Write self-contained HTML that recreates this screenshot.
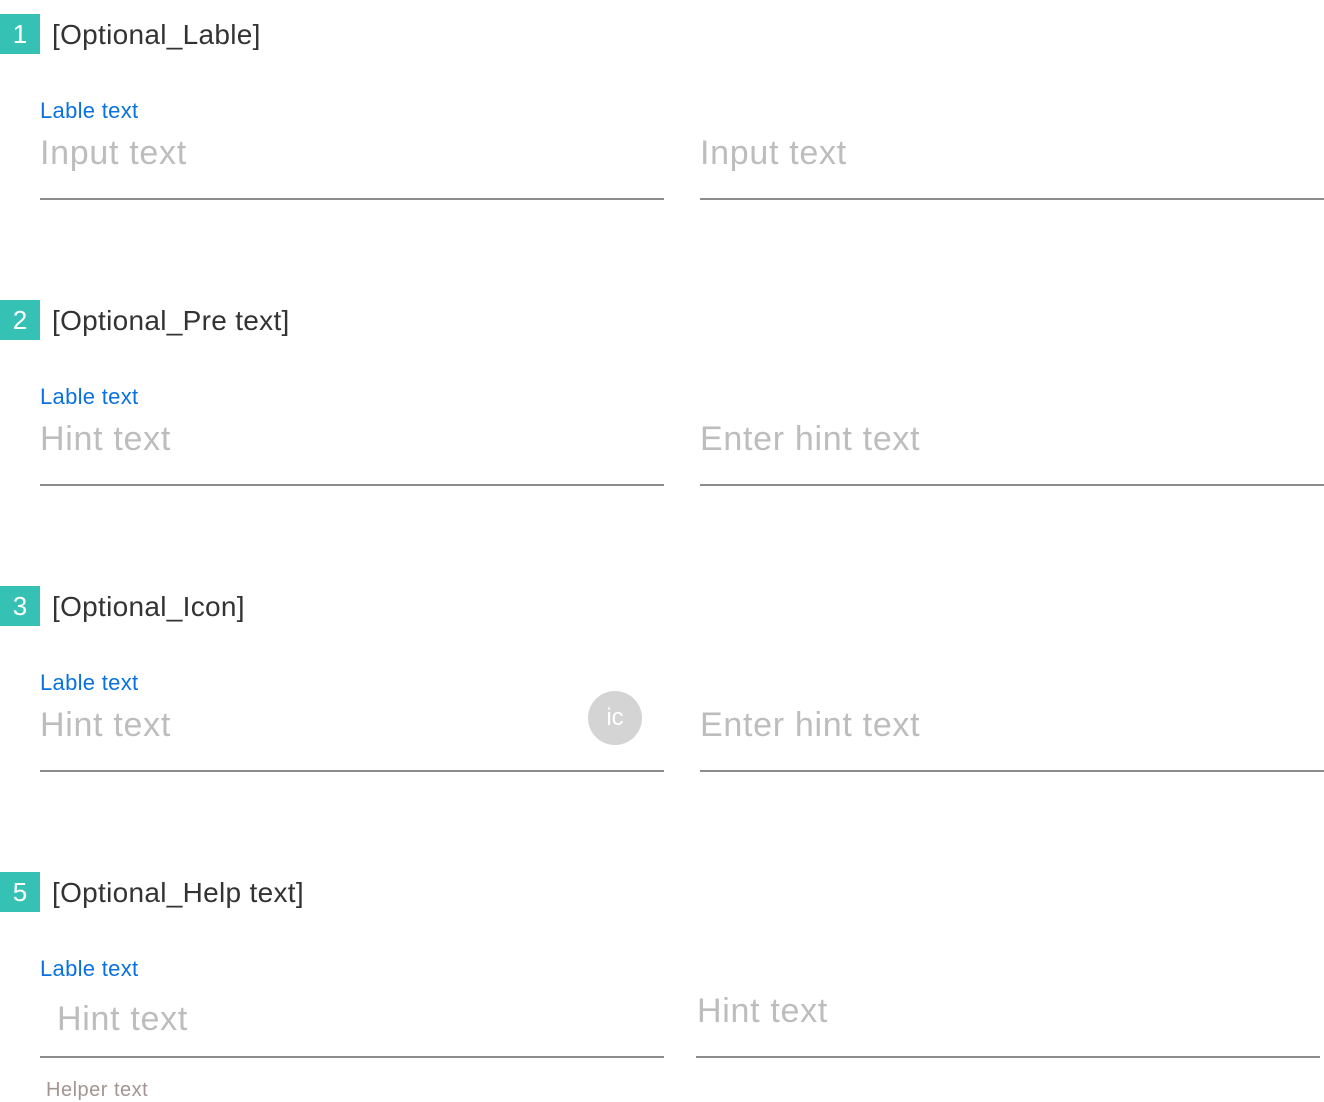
<!DOCTYPE html>
<html><head><meta charset="utf-8"><style>
html,body{margin:0;padding:0;background:#fff;width:1324px;height:1102px;overflow:hidden;position:relative;font-family:"Liberation Sans","DejaVu Sans",sans-serif}
.a{position:absolute;white-space:nowrap;line-height:1}
.badge{position:absolute;left:0;width:40px;height:40px;background:#35c2b4;color:#fff;font-size:26px;line-height:40px;text-align:center}
.h{font-size:28px;color:#333;left:52px;letter-spacing:0.3px}
.l{font-size:22px;color:#0a72de;left:40px;letter-spacing:0.3px}
.i{font-size:34px;color:#bdbdbd;letter-spacing:0.7px}
.line{position:absolute;height:2px;background:#8c8c8c}
</style></head><body>

<div class="badge" style="top:14px">1</div>
<div class="a h" style="top:21px">[Optional_Lable]</div>
<div class="a l" style="top:100px">Lable text</div>
<div class="a i" style="top:136px;left:40px">Input text</div>
<div class="line" style="top:198px;left:40px;width:624px"></div>
<div class="a i" style="top:136px;left:700px">Input text</div>
<div class="line" style="top:198px;left:700px;width:624px"></div>

<div class="badge" style="top:300px">2</div>
<div class="a h" style="top:307px">[Optional_Pre text]</div>
<div class="a l" style="top:386px">Lable text</div>
<div class="a i" style="top:422px;left:40px">Hint text</div>
<div class="line" style="top:484px;left:40px;width:624px"></div>
<div class="a i" style="top:422px;left:700px">Enter hint text</div>
<div class="line" style="top:484px;left:700px;width:624px"></div>

<div class="badge" style="top:586px">3</div>
<div class="a h" style="top:593px">[Optional_Icon]</div>
<div class="a l" style="top:672px">Lable text</div>
<div class="a i" style="top:708px;left:40px">Hint text</div>
<div style="position:absolute;left:588px;top:691px;width:54px;height:54px;border-radius:50%;background:#d4d4d4;color:#fff;font-size:24px;line-height:54px;text-align:center">ic</div>
<div class="line" style="top:770px;left:40px;width:624px"></div>
<div class="a i" style="top:708px;left:700px">Enter hint text</div>
<div class="line" style="top:770px;left:700px;width:624px"></div>

<div class="badge" style="top:872px">5</div>
<div class="a h" style="top:879px">[Optional_Help text]</div>
<div class="a l" style="top:958px">Lable text</div>
<div class="a i" style="top:1002px;left:57px">Hint text</div>
<div class="line" style="top:1056px;left:40px;width:624px"></div>
<div class="a i" style="top:994px;left:697px">Hint text</div>
<div class="line" style="top:1056px;left:696px;width:624px"></div>
<div class="a" style="top:1080px;left:46px;font-size:20px;color:#a39593;letter-spacing:0.5px">Helper text</div>

</body></html>
